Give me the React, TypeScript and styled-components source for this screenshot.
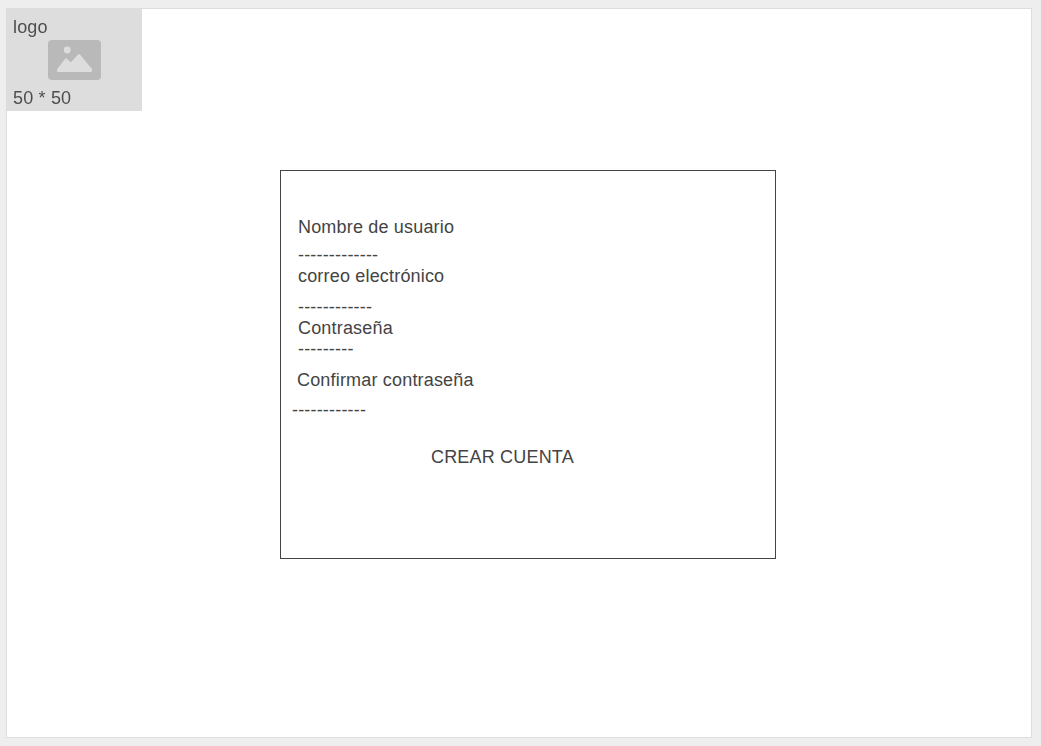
import React from "react";
import styled, { createGlobalStyle } from "styled-components";

const GlobalStyle = createGlobalStyle`
  * { box-sizing: border-box; }
  body {
    margin: 0;
    background: #eeeeee;
    color: #444444;
    font: 18px/20px "Liberation Sans", Arial, sans-serif;
    letter-spacing: 0.18px;
  }
`;

const Screen = styled.div`
  height: 746px;
  padding: 8px 9px 8px 6px;
`;

const Page = styled.main`
  height: 730px;
  border: 1px solid #dddddd;
  background: #ffffff;
`;

const LogoBox = styled.header`
  display: flex;
  flex-direction: column;
  width: 135px;
  height: 102px;
  padding: 8px 6px 0;
  background: #dddddd;
`;

const LogoText = styled.span`
  opacity: 0.94;
  will-change: opacity;
`;

const LogoImage = styled.svg`
  display: block;
  width: 53px;
  height: 40px;
  margin: 3px 0 8px 35px;
`;

const Card = styled.form`
  display: flex;
  flex-direction: column;
  width: 496px;
  height: 389px;
  margin: 59px 0 0 273px;
  padding: 46px 0 0 11px;
  border: 1px solid #444444;
`;

const Line = styled.div<{ $top?: number; $left?: number }>`
  height: 20px;
  margin-top: ${(p) => p.$top ?? 0}px;
  margin-left: ${(p) => p.$left ?? 6}px;
  white-space: nowrap;
`;

export default function App() {
  return (
    <>
      <GlobalStyle />
      <Screen>
        <Page>
          <LogoBox>
            <LogoText>logo</LogoText>
            <LogoImage viewBox="0 0 53 40">
              <rect width="53" height="40" rx="4" fill="#b9b9b9" />
              <circle cx="19.2" cy="10" r="3.4" fill="#dddddd" />
              <path
                d="M10 29.5 L18 19.3 L22.8 24 L31 15 L43 29.5 V31 H10 Z"
                fill="#dddddd"
                stroke="#dddddd"
                strokeWidth="2"
                strokeLinejoin="round"
              />
            </LogoImage>
            <LogoText>50 * 50</LogoText>
          </LogoBox>
          <Card>
            <Line>Nombre de usuario</Line>
            <Line $top={8}>-------------</Line>
            <Line $top={1}>correo electrónico</Line>
            <Line $top={11}>------------</Line>
            <Line $top={1}>Contraseña</Line>
            <Line $top={1}>---------</Line>
            <Line $top={11} $left={5}>Confirmar contraseña</Line>
            <Line $top={10} $left={0}>------------</Line>
            <Line $top={27} $left={139}>CREAR CUENTA</Line>
          </Card>
        </Page>
      </Screen>
    </>
  );
}
